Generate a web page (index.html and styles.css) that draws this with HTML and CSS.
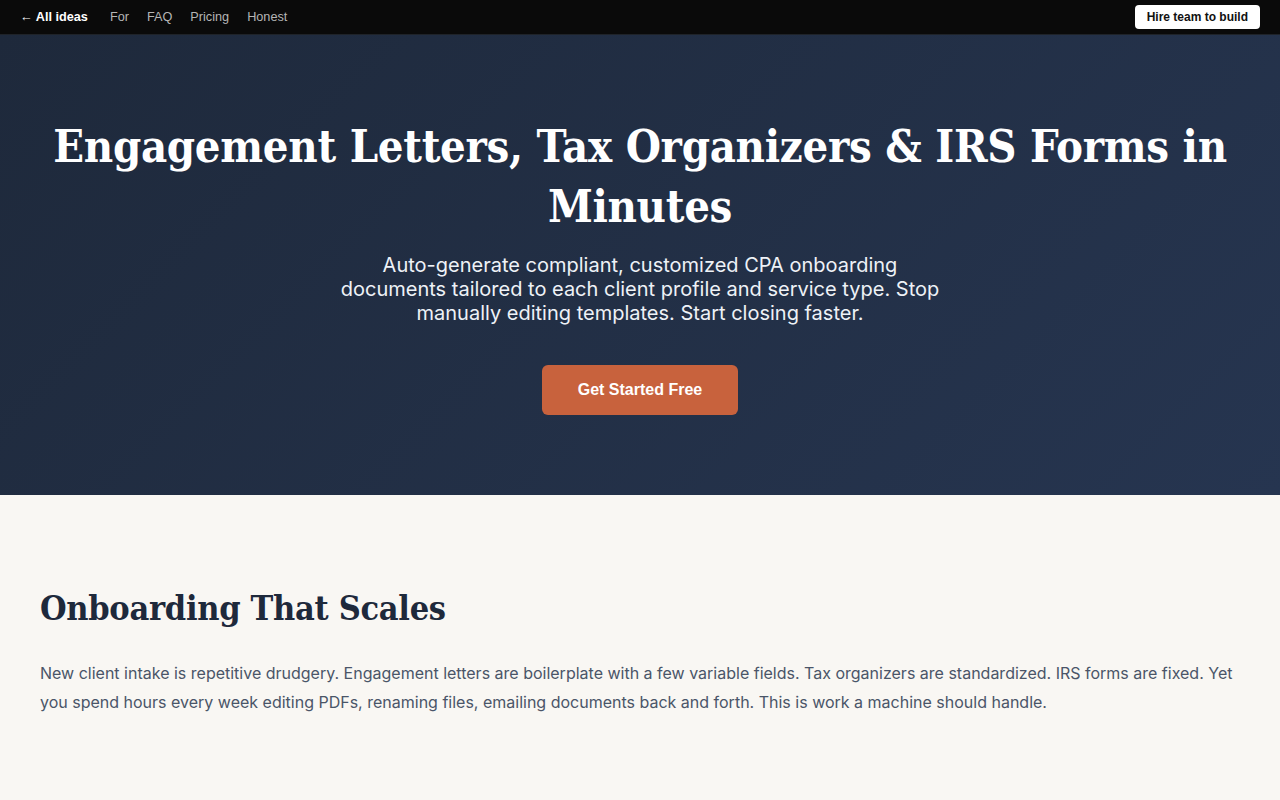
FILE: index.html
```html
<!DOCTYPE html>
<html lang="en">
<head>
  <meta charset="UTF-8" />
  <title>CPA Onboarding Docs</title>
  <link rel="stylesheet" href="styles.css">
</head>
<body>

  <nav class="topbar">
    <div class="topbar-links">
      <a href="#" class="back">&larr; All ideas</a>
      <a href="#">For</a>
      <a href="#">FAQ</a>
      <a href="#">Pricing</a>
      <a href="#">Honest</a>
    </div>
    <a href="#" class="hire">Hire team to build</a>
  </nav>

  <header class="hero">
    <h1>Engagement Letters, Tax Organizers &amp; IRS Forms in Minutes</h1>
    <p class="lead">Auto-generate compliant, customized CPA onboarding documents tailored to each client profile and service type. Stop manually editing templates. Start closing faster.</p>
    <a href="#" class="cta">Get Started Free</a>
  </header>

  <section class="problem">
    <h2>Onboarding That Scales</h2>
    <p>New client intake is repetitive drudgery. Engagement letters are boilerplate with a few variable fields. Tax organizers are standardized. IRS forms are fixed. Yet you spend hours every week editing PDFs, renaming files, emailing documents back and forth. This is work a machine should handle.</p>
  </section>

</body>
</html>
```

FILE: styles.css
```css
body {
  margin: 0;
  font-family: Inter, "Noto Sans", sans-serif;
  background: #f9f7f3;
}
a {
  text-decoration: none;
}

.topbar {
  display: flex;
  justify-content: space-between;
  align-items: center;
  height: 34px;
  padding: 0 20px;
  background: #0a0a0a;
  border-bottom: 1px solid #1f2329;
  font-family: "Liberation Sans", Arial, sans-serif;
  font-size: 12.7px;
}
.topbar-links {
  display: flex;
  gap: 18px;
  margin-top: -1px;
}
.topbar-links a {
  color: #b5b5b5;
}
.topbar-links a.back {
  color: #fff;
  font-weight: bold;
  margin-right: 4px;
}
.hire {
  background: #fff;
  color: #111;
  font-weight: bold;
  font-size: 12px;
  padding: 5px 12px;
  border-radius: 4px;
}

.hero {
  background: linear-gradient(135deg, #1e293b 0%, #263550 100%);
  color: #fff;
  text-align: center;
  padding: 82px 40px 80px;
}
.hero h1 {
  font-family: "DejaVu Serif Condensed", "DejaVu Serif", serif;
  font-stretch: condensed;
  font-size: 45px;
  line-height: 60px;
  font-weight: bold;
  margin: 0 0 16px;
  letter-spacing: -0.3px;
}
.lead {
  max-width: 604px;
  margin: 0 auto 40px;
  font-size: 20px;
  line-height: 24px;
  color: #eef2f7;
}
.cta {
  display: inline-block;
  background: #c8623d;
  color: #fff;
  font-family: "Liberation Sans", Arial, sans-serif;
  font-weight: bold;
  font-size: 16px;
  padding: 16px 36px;
  border-radius: 6px;
}

.problem {
  padding: 93px 40px 60px;
}
.problem h2 {
  font-family: "DejaVu Serif Condensed", "DejaVu Serif", serif;
  font-stretch: condensed;
  font-size: 34px;
  font-weight: bold;
  color: #1e293b;
  margin: 0 0 31px;
  letter-spacing: -0.3px;
}
.problem p {
  font-size: 16px;
  line-height: 29px;
  color: #4a5568;
  margin: 0;
}
```
